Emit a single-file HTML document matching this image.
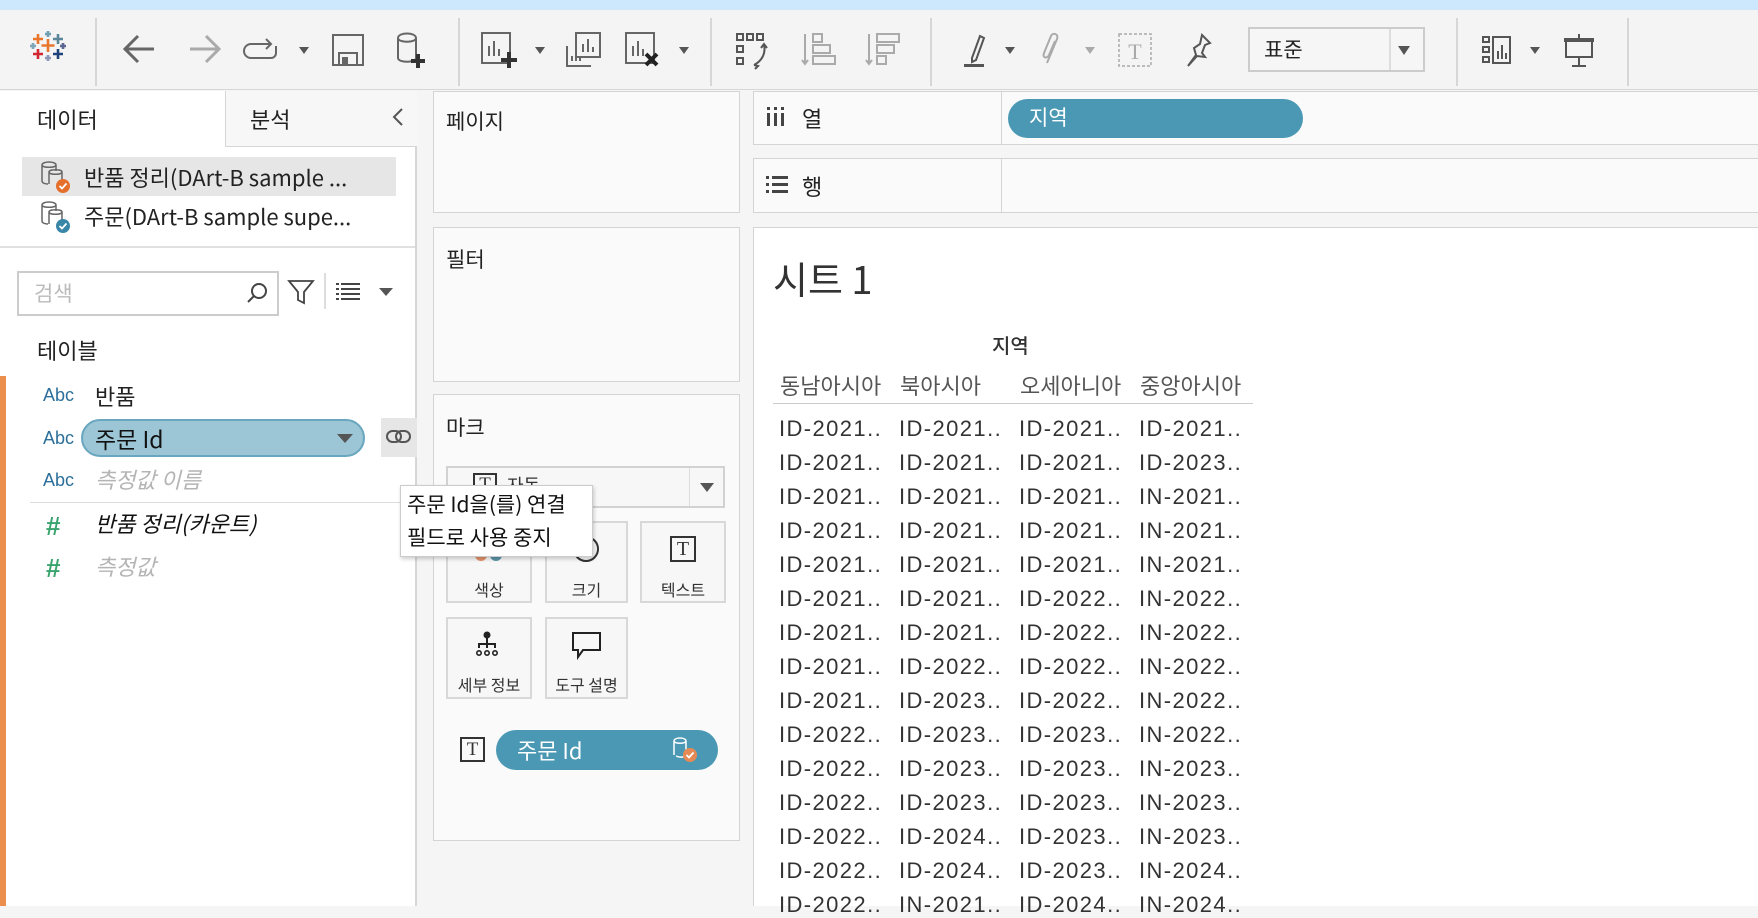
<!DOCTYPE html>
<html><head><meta charset="utf-8">
<style>
*{box-sizing:border-box;margin:0;padding:0}
body{width:1758px;height:906px;overflow:hidden;background:#f5f5f5;font-family:"Liberation Sans","Noto Sans CJK KR",sans-serif;color:#333;position:relative}
.a{position:absolute}
.k{font-family:"Noto Sans CJK KR","Liberation Sans",sans-serif}
.card{position:absolute;background:#fafafa;border:1px solid #d4d4d4}
.btn{position:absolute;border:2px solid #d8d8d8;background:#f7f7f7;text-align:center;font-size:15px;color:#333}
.sep{position:absolute;top:18px;width:2px;height:68px;background:#d6d6d6}
.dd{position:absolute;width:0;height:0;border-left:5px solid transparent;border-right:5px solid transparent;border-top:7px solid #555}
.row{position:absolute;font-size:22px;letter-spacing:1.4px;color:#333;white-space:nowrap}
svg{position:absolute;overflow:visible}
</style></head><body>
<div class="a" style="left:0;top:0;width:1758px;height:10px;background:#cde8fc"></div>
<div class="a" style="left:0;top:10px;width:1758px;height:80px;background:#f4f4f4;border-bottom:1px solid #d6d6d6"></div>
<svg style="left:28px;top:30px" width="40" height="40" viewBox="0 0 40 40">
<g stroke-width="2.6">
<path d="M20 9v13M13.5 15.5h13" stroke="#e8762d"/>
<path d="M10 4v10M5 9h10" stroke="#e8762d"/>
<path d="M30 4v10M25 9h10" stroke="#5b879b"/>
<path d="M20 1v6M17 4h6" stroke="#6f9fb2"/>
<path d="M5 13v6M2 16h6" stroke="#7ea6b8"/>
<path d="M35 13v6M32 16h6" stroke="#5c6692"/>
<path d="M10 19v10M5 24h10" stroke="#d22630"/>
<path d="M30 19v10M25 24h10" stroke="#1f447c"/>
<path d="M20 25v6M17 28h6" stroke="#8e96b8"/>
</g></svg>
<div class="sep" style="left:95px"></div>
<svg style="left:122px;top:34px" width="34" height="30"><path d="M32 15H4M16 2L3 15l13 13" fill="none" stroke="#666" stroke-width="3"/></svg>
<svg style="left:188px;top:34px" width="34" height="30"><path d="M2 15h28M18 2l13 13-13 13" fill="none" stroke="#aaa" stroke-width="3"/></svg>
<svg style="left:244px;top:38px" width="40" height="24"><path d="M26 6H7a5 5 0 0 0 0 14h20a5 5 0 0 0 5-5V8M22 1l5 5-5 5" fill="none" stroke="#666" stroke-width="2"/></svg>
<div class="dd" style="left:299px;top:47px"></div>
<svg style="left:332px;top:34px" width="32" height="32"><rect x="1" y="1" width="30" height="30" fill="none" stroke="#666" stroke-width="2"/><rect x="7" y="19" width="18" height="12" fill="none" stroke="#666" stroke-width="2"/><rect x="10" y="23" width="6" height="8" fill="#666"/></svg>
<svg style="left:396px;top:32px" width="34" height="38"><path d="M2 6c0-6 18-6 18 0v20c0 5-18 5-18 0z M2 6c0 5 18 5 18 0" fill="none" stroke="#666" stroke-width="2"/><path d="M22 22v14M15 29h14" stroke="#333" stroke-width="4"/></svg>
<div class="sep" style="left:458px"></div>
<svg style="left:481px;top:32px" width="36" height="38"><rect x="1" y="1" width="28" height="30" fill="none" stroke="#666" stroke-width="2"/><path d="M8 24V14M13 24V9M18 24v-7" stroke="#666" stroke-width="2"/><path d="M28 20v16M20 28h16" stroke="#333" stroke-width="4"/></svg>
<div class="dd" style="left:535px;top:47px"></div>
<svg style="left:566px;top:32px" width="36" height="36"><rect x="10" y="1" width="24" height="24" fill="none" stroke="#666" stroke-width="2"/><path d="M17 20V12M22 20V7M27 20v-5" stroke="#666" stroke-width="2"/><path d="M1 14v20h24" fill="none" stroke="#666" stroke-width="2"/><path d="M6 24v5M10 24v5M14 24v5" stroke="#666" stroke-width="2"/></svg>
<svg style="left:625px;top:32px" width="36" height="38"><rect x="1" y="1" width="28" height="30" fill="none" stroke="#666" stroke-width="2"/><path d="M8 24V14M13 24V9M18 24v-7" stroke="#666" stroke-width="2"/><path d="M21 22l11 11M32 22L21 33" stroke="#222" stroke-width="4"/></svg>
<div class="dd" style="left:679px;top:47px"></div>
<div class="sep" style="left:710px"></div>
<svg style="left:736px;top:33px" width="36" height="36"><g fill="none" stroke="#555" stroke-width="2"><rect x="1" y="1" width="6" height="6"/><rect x="11" y="1" width="6" height="6"/><rect x="21" y="1" width="6" height="6"/><rect x="1" y="13" width="6" height="6"/><rect x="1" y="25" width="6" height="6"/><path d="M28 12c2 8-2 16-10 20M25 15l3-4 3 4M18 32l4 1-3 3"/></g></svg>
<svg style="left:802px;top:32px" width="36" height="36"><g fill="none" stroke="#aaa" stroke-width="2"><path d="M3 2v30M0 28l3 4 3-4"/><rect x="11" y="2" width="9" height="8"/><rect x="11" y="13" width="17" height="8"/><rect x="11" y="24" width="22" height="8"/></g></svg>
<svg style="left:866px;top:32px" width="36" height="36"><g fill="none" stroke="#aaa" stroke-width="2"><path d="M3 2v30M0 28l3 4 3-4"/><rect x="11" y="2" width="22" height="8"/><rect x="11" y="13" width="17" height="8"/><rect x="11" y="24" width="9" height="8"/></g></svg>
<div class="sep" style="left:930px"></div>
<svg style="left:962px;top:33px" width="24" height="36"><path d="M10 25L18 3l4 2-8 22-4 2z" fill="none" stroke="#555" stroke-width="2"/><rect x="2" y="31" width="20" height="3" fill="#555"/></svg>
<div class="dd" style="left:1005px;top:47px"></div>
<svg style="left:1042px;top:33px" width="20" height="34"><path d="M5 30L15 6c2-5-4-7-6-3L2 20c-2 5 3 6 5 2l6-14" fill="none" stroke="#aaa" stroke-width="2"/></svg>
<div class="dd" style="left:1085px;top:47px;border-top-color:#aaa"></div>
<svg style="left:1118px;top:33px" width="34" height="34"><rect x="1" y="1" width="32" height="32" fill="none" stroke="#aaa" stroke-width="1.5" stroke-dasharray="3 2"/><text x="17" y="26" font-family="Liberation Serif" font-size="22" fill="#aaa" text-anchor="middle">T</text></svg>
<svg style="left:1184px;top:33px" width="30" height="34"><path d="M18 2l8 8-5 2-3 8 3 4-8-1-9 10 8-11-2-7 6-4z" fill="none" stroke="#555" stroke-width="2"/></svg>
<div class="a" style="left:1248px;top:27px;width:177px;height:45px;border:2px solid #ccc;background:#f6f6f6"></div>
<div class="a k" style="left:1264px;top:34px;font-size:21px;color:#222">표준</div>
<div class="a" style="left:1389px;top:29px;width:2px;height:41px;background:#ddd"></div>
<div class="dd" style="left:1398px;top:46px;border-left-width:6px;border-right-width:6px;border-top-width:9px"></div>
<div class="sep" style="left:1456px"></div>
<svg style="left:1482px;top:35px" width="30" height="30"><g fill="none" stroke="#555" stroke-width="2"><rect x="1" y="2" width="6" height="5"/><rect x="1" y="12" width="6" height="5"/><rect x="1" y="22" width="6" height="5"/><rect x="11" y="2" width="17" height="26"/><path d="M16 24v-8M20 24V10M24 24v-6"/></g></svg>
<div class="dd" style="left:1530px;top:47px"></div>
<svg style="left:1562px;top:34px" width="34" height="34"><g fill="none" stroke="#555" stroke-width="2"><path d="M17 0v4"/><rect x="4" y="5" width="26" height="18"/><path d="M17 23v9M10 32h14"/></g><rect x="2" y="4" width="30" height="4" fill="#555"/></svg>
<div class="sep" style="left:1627px"></div>

<div class="a" style="left:0;top:91px;width:417px;height:815px;background:#fff;border-right:2px solid #d6d6d6"></div>
<div class="a" style="left:225px;top:91px;width:192px;height:56px;background:#f7f7f7;border-left:1px solid #d6d6d6;border-bottom:1px solid #d6d6d6"></div>
<div class="a k" style="left:37px;top:103px;font-size:22px;color:#222">데이터</div>
<div class="a k" style="left:250px;top:103px;font-size:22px;color:#222">분석</div>
<svg style="left:392px;top:108px" width="12" height="18"><path d="M10 1L2 9l8 8" fill="none" stroke="#555" stroke-width="2"/></svg>
<div class="a" style="left:22px;top:157px;width:374px;height:39px;background:#e6e6e6"></div>
<svg style="left:38px;top:160px" width="34" height="34"><g fill="none" stroke="#666" stroke-width="1.5"><path d="M4 5c0-4 14-4 14 0v6M4 5c0 3 14 3 14 0M4 5v16c0 2 3 3 6 3"/><path d="M11 12c0-3 13-3 13 0v8M11 12c0 3 13 3 13 0M11 12v12"/></g><circle cx="25" cy="26" r="7" fill="#e5702c"/><path d="M21.5 26l2.5 2.5 4.5-5" stroke="#fff" stroke-width="1.8" fill="none"/></svg>
<div class="a k" style="left:84px;top:161px;font-size:22px;color:#222">반품 정리(DArt-B sample ...</div>
<svg style="left:38px;top:200px" width="34" height="34"><g fill="none" stroke="#666" stroke-width="1.5"><path d="M4 5c0-4 14-4 14 0v6M4 5c0 3 14 3 14 0M4 5v16c0 2 3 3 6 3"/><path d="M11 12c0-3 13-3 13 0v8M11 12c0 3 13 3 13 0M11 12v12"/></g><circle cx="25" cy="26" r="7" fill="#3a86a8"/><path d="M21.5 26l2.5 2.5 4.5-5" stroke="#fff" stroke-width="1.8" fill="none"/></svg>
<div class="a k" style="left:84px;top:200px;font-size:22px;color:#222">주문(DArt-B sample supe...</div>
<div class="a" style="left:0;top:246px;width:415px;height:2px;background:#e0e0e0"></div>
<div class="a" style="left:17px;top:271px;width:262px;height:45px;border:2px solid #ccc;background:#fff"></div>
<div class="a k" style="left:34px;top:278px;font-size:21px;color:#bbb">검색</div>
<svg style="left:246px;top:282px" width="22" height="22"><circle cx="13" cy="9" r="7" fill="none" stroke="#444" stroke-width="2"/><path d="M8 14l-6 6" stroke="#444" stroke-width="2"/></svg>
<svg style="left:288px;top:279px" width="26" height="26"><path d="M1 2h24l-9 11v11l-6-3v-8z" fill="none" stroke="#444" stroke-width="1.8"/></svg>
<div class="a" style="left:324px;top:273px;width:2px;height:36px;background:#ddd"></div>
<svg style="left:336px;top:282px" width="24" height="18"><g stroke="#444" stroke-width="2"><path d="M0 2h3M5 2h19M0 7h3M5 7h19M0 12h3M5 12h19M0 17h3M5 17h19"/></g></svg>
<div class="dd" style="left:379px;top:288px;border-left-width:7px;border-right-width:7px;border-top-width:8px"></div>
<div class="a k" style="left:37px;top:334px;font-size:22px;color:#222">테이블</div>
<div class="a" style="left:0;top:376px;width:6px;height:530px;background:#ec8f4e"></div>
<div class="a" style="left:43px;top:385px;font-size:18px;color:#2b6f9a">Abc</div>
<div class="a k" style="left:95px;top:380px;font-size:22px;color:#222">반품</div>
<div class="a" style="left:43px;top:428px;font-size:18px;color:#2b6f9a">Abc</div>
<div class="a" style="left:81px;top:419px;width:284px;height:38px;border-radius:19px;background:#9cc5d5;border:2px solid #69a6bf"></div>
<div class="a k" style="left:95px;top:421px;font-size:23px;color:#111">주문 Id</div>
<div class="dd" style="left:337px;top:434px;border-left-width:8px;border-right-width:8px;border-top-width:9px"></div>
<div class="a" style="left:381px;top:418px;width:36px;height:39px;background:#e6e6e6"></div>
<svg style="left:385px;top:428px" width="28" height="18"><g fill="none" stroke="#555" stroke-width="2"><rect x="2" y="3" width="14" height="11" rx="5.5"/><rect x="11" y="3" width="14" height="11" rx="5.5"/></g></svg>
<div class="a" style="left:43px;top:470px;font-size:18px;color:#2b6f9a">Abc</div>
<div class="a k" style="left:95px;top:463px;font-size:22px;color:#b4b4b4;font-style:italic">측정값 이름</div>
<div class="a" style="left:30px;top:502px;width:385px;height:1px;background:#ddd"></div>
<div class="a" style="left:46px;top:511px;font-size:26px;color:#3aa46e;font-weight:bold">#</div>
<div class="a k" style="left:95px;top:507px;font-size:22px;color:#111;font-style:italic">반품 정리(카운트)</div>
<div class="a" style="left:46px;top:553px;font-size:26px;color:#3aa46e;font-weight:bold">#</div>
<div class="a k" style="left:95px;top:550px;font-size:22px;color:#b4b4b4;font-style:italic">측정값</div>

<div class="card" style="left:433px;top:91px;width:307px;height:122px"></div>
<div class="a k" style="left:446px;top:106px;font-size:21px;color:#222">페이지</div>
<div class="card" style="left:433px;top:227px;width:307px;height:155px"></div>
<div class="a k" style="left:446px;top:244px;font-size:21px;color:#222">필터</div>
<div class="card" style="left:433px;top:394px;width:307px;height:447px"></div>
<div class="a k" style="left:446px;top:412px;font-size:21px;color:#222">마크</div>
<div class="a" style="left:446px;top:466px;width:279px;height:42px;border:2px solid #d2d2d2;background:#f7f7f7"></div>
<div class="a" style="left:689px;top:468px;width:1px;height:38px;background:#ddd"></div>
<div class="dd" style="left:700px;top:483px;border-left-width:7px;border-right-width:7px;border-top-width:9px"></div>
<div class="a" style="left:473px;top:473px;width:24px;height:24px;border:2px solid #333;font-family:'Liberation Serif';font-size:19px;text-align:center;line-height:20px">T</div>
<div class="a k" style="left:507px;top:472px;font-size:18px;color:#333">자동</div>
<div class="btn k" style="left:446px;top:521px;width:86px;height:82px"><div style="margin-top:54px;font-size:16px">색상</div></div>
<div class="btn k" style="left:545px;top:521px;width:83px;height:82px"><div style="margin-top:54px;font-size:16px">크기</div></div>
<div class="btn k" style="left:640px;top:521px;width:86px;height:82px"><div style="margin-top:54px;font-size:16px">텍스트</div></div>
<div class="a" style="left:475px;top:549px;width:12px;height:12px;border-radius:6px;background:#e3926a"></div>
<div class="a" style="left:490px;top:549px;width:12px;height:12px;border-radius:6px;background:#5c95a9"></div>
<div class="a" style="left:573px;top:536px;width:26px;height:26px;border-radius:13px;border:2px solid #333"></div>
<div class="a" style="left:670px;top:536px;width:26px;height:26px;border:2px solid #333;font-family:'Liberation Serif';font-size:20px;text-align:center;line-height:22px">T</div>
<div class="btn k" style="left:446px;top:617px;width:86px;height:82px"><div style="margin-top:53px;font-size:16px">세부 정보</div></div>
<div class="btn k" style="left:545px;top:617px;width:83px;height:82px"><div style="margin-top:53px;font-size:16px">도구 설명</div></div>
<svg style="left:474px;top:631px" width="26" height="30"><circle cx="13" cy="4" r="3.5" fill="#222"/><path d="M13 7v10M5 17v-4h16v4" fill="none" stroke="#222" stroke-width="2"/><g fill="none" stroke="#222" stroke-width="1.6"><circle cx="5" cy="22" r="2.2"/><circle cx="13" cy="22" r="2.2"/><circle cx="21" cy="22" r="2.2"/></g></svg>
<svg style="left:572px;top:632px" width="30" height="28"><path d="M1 1h27v17H11l-5 7v-7H1z" fill="none" stroke="#222" stroke-width="2"/></svg>
<div class="a" style="left:460px;top:737px;width:25px;height:25px;border:2px solid #333;font-family:'Liberation Serif';font-size:19px;text-align:center;line-height:21px">T</div>
<div class="a" style="left:496px;top:730px;width:222px;height:40px;border-radius:20px;background:#4a98b4"></div>
<div class="a k" style="left:517px;top:734px;font-size:22px;color:#fff">주문 Id</div>
<svg style="left:672px;top:736px" width="26" height="28"><path d="M2 5c0-4 12-4 12 0v14c0 2-6 3-10 1M2 5c0 3 12 3 12 0M2 5v14" fill="none" stroke="#fff" stroke-width="1.5"/><circle cx="18" cy="19" r="7" fill="#e58a55"/><path d="M14.5 19l2.5 2.5 4.5-5" stroke="#fff" stroke-width="1.8" fill="none"/></svg>

<div class="a k" style="left:400px;top:485px;width:193px;height:72px;background:#fff;border:1px solid #ccc;box-shadow:1px 2px 4px rgba(0,0,0,.2);font-size:21px;line-height:33px;padding:2px 6px;color:#111;white-space:nowrap">주문 Id을(를) 연결<br>필드로 사용 중지</div>

<div class="a" style="left:753px;top:91px;width:1005px;height:54px;background:#fafafa;border:1px solid #d4d4d4;border-right:none"></div>
<div class="a" style="left:1001px;top:91px;width:1px;height:54px;background:#d4d4d4"></div>
<svg style="left:767px;top:107px" width="18" height="20"><g fill="#444"><rect x="0" y="0" width="3" height="3"/><rect x="7" y="0" width="3" height="3"/><rect x="14" y="0" width="3" height="3"/><rect x="0" y="6" width="3" height="13"/><rect x="7" y="6" width="3" height="13"/><rect x="14" y="6" width="3" height="13"/></g></svg>
<div class="a k" style="left:802px;top:102px;font-size:22px;color:#222">열</div>
<div class="a" style="left:1008px;top:99px;width:295px;height:39px;border-radius:20px;background:#4a98b4"></div>
<div class="a k" style="left:1029px;top:102px;font-size:21px;color:#fff">지역</div>
<div class="a" style="left:753px;top:158px;width:1005px;height:55px;background:#fafafa;border:1px solid #d4d4d4;border-right:none"></div>
<div class="a" style="left:1001px;top:158px;width:1px;height:55px;background:#d4d4d4"></div>
<svg style="left:766px;top:176px" width="22" height="18"><g fill="#444"><rect x="0" y="0" width="3" height="3"/><rect x="6" y="0" width="16" height="3"/><rect x="0" y="7" width="3" height="3"/><rect x="6" y="7" width="16" height="3"/><rect x="0" y="14" width="3" height="3"/><rect x="6" y="14" width="16" height="3"/></g></svg>
<div class="a k" style="left:802px;top:170px;font-size:22px;color:#222">행</div>

<div class="a" style="left:753px;top:227px;width:1005px;height:679px;background:#fff;border:1px solid #d4d4d4;border-right:none;border-bottom:none"></div>
<div class="a k" style="left:773px;top:250px;font-size:38px;color:#333">시트 1</div>
<div class="a k" style="left:992px;top:330px;font-size:20px;color:#333;font-weight:500">지역</div>
<div class="a k" style="left:780px;top:369px;font-size:22px;color:#555">동남아시아</div>
<div class="a k" style="left:900px;top:369px;font-size:22px;color:#555">북아시아</div>
<div class="a k" style="left:1020px;top:369px;font-size:22px;color:#555">오세아니아</div>
<div class="a k" style="left:1140px;top:369px;font-size:22px;color:#555">중앙아시아</div>
<div class="a" style="left:773px;top:403px;width:480px;height:1px;background:#ccc"></div>
<div id="t"></div>
<script>
var d=[["ID-2021..","ID-2021..","ID-2021..","ID-2021.."],["ID-2021..","ID-2021..","ID-2021..","ID-2023.."],["ID-2021..","ID-2021..","ID-2021..","IN-2021.."],["ID-2021..","ID-2021..","ID-2021..","IN-2021.."],["ID-2021..","ID-2021..","ID-2021..","IN-2021.."],["ID-2021..","ID-2021..","ID-2022..","IN-2022.."],["ID-2021..","ID-2021..","ID-2022..","IN-2022.."],["ID-2021..","ID-2022..","ID-2022..","IN-2022.."],["ID-2021..","ID-2023..","ID-2022..","IN-2022.."],["ID-2022..","ID-2023..","ID-2023..","IN-2022.."],["ID-2022..","ID-2023..","ID-2023..","IN-2023.."],["ID-2022..","ID-2023..","ID-2023..","IN-2023.."],["ID-2022..","ID-2024..","ID-2023..","IN-2023.."],["ID-2022..","ID-2024..","ID-2023..","IN-2024.."],["ID-2022..","IN-2021..","ID-2024..","IN-2024.."]];
var h="",x=[779,899,1019,1139];
for(var i=0;i<d.length;i++)for(var j=0;j<4;j++)h+='<div class="row" style="left:'+x[j]+'px;top:'+(416+i*34)+'px">'+d[i][j]+'</div>';
document.getElementById("t").innerHTML=h;
</script>
</body></html>
